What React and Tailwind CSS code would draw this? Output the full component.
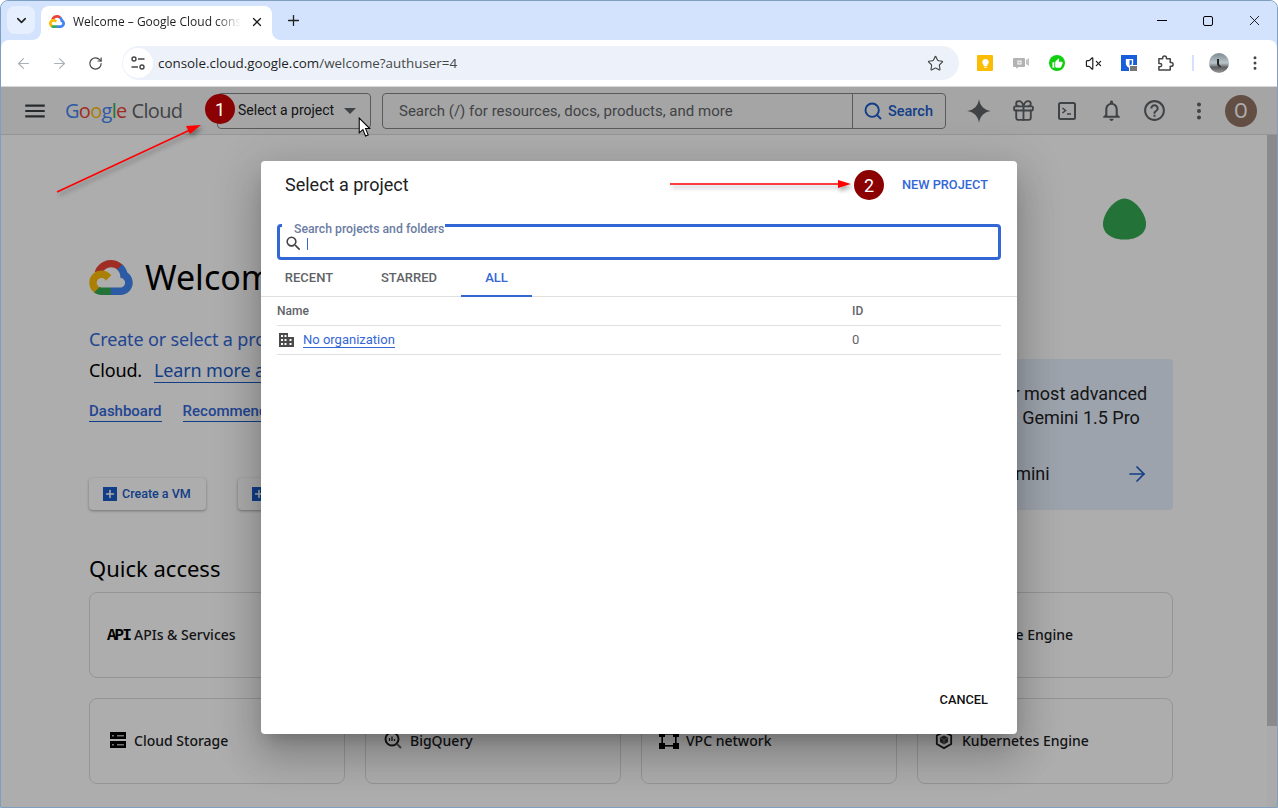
import React from "react";
import { ArrowLeft, ArrowRight, RotateCw, ChevronDown, Plus, X, Star, EllipsisVertical, Gift, Search, VolumeX } from "lucide-react";
import { MdNotificationsNone, MdHelpOutline, MdSearch, MdMenu, MdThumbUp } from "react-icons/md";

const CloudLogo = ({ className }) => (
  <svg viewBox="0 0 2385.7 1919.9" className={className}>
    <path fill="#ea4335" d="M1513.8 528.7h72.8l207.4-207.4 10.2-88c-385.9-340.6-975-303.9-1315.6 82C393.9 422.5 329.9 542.2 297 671c23.1-9.5 48.7-11 72.8-4.4l414.7-68.4s21.1-34.9 32-32.7c184.5-202.6 495-226.2 708-53.8h-10.7z" />
    <path fill="#4285f4" d="M2089.4 688.2c-47.7-175.5-145.5-333.3-281.6-454l-291 291c122.9 100.4 192.9 251.7 189.9 410.4v51.7c143.1 0 259 116 259 259 0 143.1-116 259-259 259h-518.1l-51.7 52.4v310.7l51.7 51.7h518.1c297 2.3 560.5-190.2 648.7-473.8 88-283.7-20-591.7-266-758.2z" />
    <path fill="#34a853" d="M669.8 1917h518.1v-414.7H669.8c-36.9 0-73.4-7.9-107-23.3l-72.8 22.5-208.8 207.4-18.2 72.8c117.1 88.4 260 136.2 406.8 135.3z" />
    <path fill="#fbbc05" d="M669.8 571.6c-287.8 1.7-542.7 186-634.5 458.7-91.8 272.7-.3 573.7 227.8 749.1l300.5-300.5c-130.4-58.9-188.3-212.3-129.4-342.7 58.9-130.4 212.3-188.3 342.7-129.4 57.4 26 103.4 72 129.4 129.4l300.5-300.5c-127.9-167.1-326.6-264.8-537-264.1z" />
  </svg>
);

const Tune = () => (
  <svg viewBox="0 0 16 16" className="w-4 h-4" fill="none" stroke="#444746" strokeWidth="1.4">
    <circle cx="4" cy="4" r="2" /><path d="M8 4h6.500" />
    <circle cx="12" cy="12" r="2" /><path d="M1.500 12H8" />
  </svg>
);

const ToolBtn = ({ children }) => <div className="w-9 h-9 flex items-center justify-center shrink-0">{children}</div>;

const Card = ({ icon, label }) => (
  <div className="h-[86px] rounded-lg border border-[#dadce0] flex items-center pl-[17px] pb-[2px] text-[14px] font-medium font-['Noto_Sans',sans-serif] text-[#202124] whitespace-nowrap">
    <span className="w-[27px] flex items-center shrink-0">{icon}</span>
    {label}
  </div>
);

const StorageIcon = () => (
  <svg viewBox="0 0 18 18" className="w-[18px] h-[18px] ml-[2px]">
    <rect x="1" y="1" width="16" height="7" fill="#000" />
    <rect x="1" y="10" width="16" height="7" fill="#000" />
    <rect x="3" y="4" width="2" height="1.500" fill="#adadad" /><rect x="8" y="4" width="7" height="1.500" fill="#adadad" />
    <rect x="3" y="13" width="2" height="1.500" fill="#adadad" /><rect x="8" y="13" width="7" height="1.500" fill="#adadad" />
  </svg>
);
const BigQueryIcon = () => (
  <svg viewBox="0 0 20 20" className="w-[20px] h-[20px]" fill="none" stroke="#202124">
    <circle cx="9" cy="9" r="6.500" strokeWidth="2" />
    <path d="M14 14l4 4" strokeWidth="2" stroke="#5f6368" />
    <path d="M6.500 8v3M9 6.500V11M11.500 9v2" strokeWidth="1.300" />
  </svg>
);
const VpcIcon = () => (
  <svg viewBox="0 0 20 20" className="w-[20px] h-[20px]" fill="#000">
    <rect x="0" y="1" width="6" height="6" /><rect x="14" y="1" width="6" height="6" />
    <rect x="0" y="13" width="6" height="6" /><rect x="14" y="13" width="6" height="6" />
    <rect x="6" y="3" width="8" height="1.600" /><rect x="6" y="15" width="8" height="1.600" />
    <rect x="2.400" y="7" width="1.600" height="6" /><rect x="16" y="7" width="1.600" height="6" />
  </svg>
);
const KubeIcon = () => (
  <svg viewBox="0 0 20 20" className="w-[18px] h-[20px]" fill="none">
    <path d="M10 1l8 4v9.500L10 19l-8-4.500V5z" stroke="#202124" strokeWidth="2" />
    <path d="M10 5l4.500 2.300v5L10 15l-4.500-2.700v-5z" fill="#3c3c3c" />
    <path d="M5.500 7.300L10 10l4.500-2.700M10 10v5" stroke="#aaa" strokeWidth="0.800" />
  </svg>
);
const DomainIcon = () => (
  <svg viewBox="0 0 15 14" className="w-[15px] h-[14px] shrink-0">
    <path d="M0 0h9v4h6v10H0z" fill="#4a4a4a" />
    <g fill="#fff">
      <rect x="2" y="2" width="2" height="2" /><rect x="5.500" y="2" width="2" height="2" />
      <rect x="2" y="6" width="2" height="2" /><rect x="5.500" y="6" width="2" height="2" />
      <rect x="2" y="10" width="2" height="2" /><rect x="5.500" y="10" width="2" height="2" />
      <rect x="10.500" y="6" width="2" height="2" /><rect x="10.500" y="10" width="2" height="2" />
    </g>
  </svg>
);
const PuzzleIcon = () => (
  <svg viewBox="0 0 18 18" className="w-[17px] h-[17px]" fill="none" stroke="#444746" strokeWidth="1.600" strokeLinejoin="round">
    <path d="M2 4h4V3a2 2 0 0 1 4 0v1h4v4h1a2 2 0 0 1 0 4h-1v4H2v-3.500h1.200a1.800 1.800 0 0 0 0-3.600H2z" />
  </svg>
);

export default function App() {
  return (
    <div className="relative w-[1278px] h-[808px] overflow-hidden flex flex-col border border-[#7f9fc0] rounded-t-lg bg-[#d3e3fd] text-[#202124] font-['Roboto',sans-serif]">
      {/* tab strip */}
      <div className="h-[39px] shrink-0 bg-[#d3e3fd] flex items-start pt-[5px] pl-[6px]">
        <div className="w-[28px] h-[28px] rounded-lg bg-[#e6effd] flex items-center justify-center">
          <ChevronDown size={15} strokeWidth={2.5} color="#1f1f1f" />
        </div>
        <div className="relative ml-[6px] w-[231px] h-[34px] bg-white rounded-t-lg flex items-center pl-[8px] pb-[3px] font-['Open_Sans',sans-serif]">
          <span className="absolute -left-2 bottom-0 w-2 h-2 bg-[radial-gradient(circle_at_0_0,transparent_7.500px,white_8px)]" />
          <span className="absolute -right-2 bottom-0 w-2 h-2 bg-[radial-gradient(circle_at_100%_0,transparent_7.500px,white_8px)]" />
          <CloudLogo className="w-[16px] h-[13px] shrink-0" />
          <span className="ml-[8px] w-[168px] whitespace-nowrap overflow-hidden text-[12px] text-[#1f1f1f] [mask-image:linear-gradient(to_right,black_85%,transparent)]">Welcome – Google Cloud console</span>
          <X size={14} strokeWidth={2.2} color="#1f1f1f" className="ml-[9px]" />
        </div>
        <div className="ml-[7px] w-[28px] h-[28px] flex items-center justify-center">
          <Plus size={17} strokeWidth={1.8} color="#1f1f1f" />
        </div>
        <div className="ml-auto flex -mt-[5px]">
          <div className="w-[46px] h-[39px] flex items-center justify-center"><div className="w-[10px] h-px bg-black" /></div>
          <div className="w-[46px] h-[39px] flex items-center justify-center"><div className="w-[10px] h-[10px] border border-black rounded-[2px]" /></div>
          <div className="w-[46px] h-[39px] flex items-center justify-center"><X size={17} strokeWidth={1.200} color="#000" /></div>
        </div>
      </div>

      {/* browser toolbar */}
      <div className="h-[47px] shrink-0 bg-white rounded-t-lg flex items-center pl-[4px] border-b border-[#d6d6d6]">
        <ToolBtn><ArrowLeft size={17} strokeWidth={1.6} color="#aab0b6" /></ToolBtn>
        <ToolBtn><ArrowRight size={17} strokeWidth={1.6} color="#aab0b6" /></ToolBtn>
        <ToolBtn><RotateCw size={15} strokeWidth={1.9} color="#444746" /></ToolBtn>
        <div className="ml-[9px] w-[837px] h-[34px] rounded-full bg-[#edf2fa] flex items-center pl-[1px] pr-[15px]">
          <div className="w-[30px] h-[30px] rounded-full bg-white flex items-center justify-center"><Tune /></div>
          <span className="ml-[5px] text-[13.400px] font-['Open_Sans',sans-serif] text-[#1f1f1f]">console.cloud.google.com<span className="text-[#444746]">/welcome?authuser=4</span></span>
          <Star size={17} strokeWidth={1.6} color="#444746" className="ml-auto" />
        </div>
        <div className="ml-[8px] flex items-center">
          <ToolBtn>
            <div className="w-4 h-4 rounded-[1px] bg-[#fbbc04] flex items-center justify-center">
              <svg viewBox="0 0 12 12" className="w-[11px] h-[11px]"><path d="M6 1a3.600 3.600 0 0 0-2 6.600V9h4V7.600A3.600 3.600 0 0 0 6 1zM4.500 10h3v1h-3z" fill="#fff" /></svg>
            </div>
          </ToolBtn>
          <ToolBtn>
            <svg viewBox="0 0 16 14" className="w-4 h-[14px]"><path d="M0 3a1 1 0 0 1 1-1h10a1 1 0 0 1 1 1v7a1 1 0 0 1-1 1H5l-1 2-1-2H1a1 1 0 0 1-1-1z" fill="#b3b3b3" /><path d="M13 4l3-2v8l-3-2z" fill="#c4c4c4" /><rect x="5" y="5" width="3" height="3" fill="none" stroke="#fff" /></svg>
          </ToolBtn>
          <ToolBtn>
            <div className="w-4 h-4 rounded-full bg-[#0fcf0f] flex items-center justify-center"><MdThumbUp size={11} color="#fff" /></div>
          </ToolBtn>
          <ToolBtn><VolumeX size={17} strokeWidth={1.7} color="#1f1f1f" /></ToolBtn>
          <ToolBtn>
            <div className="relative w-4 h-4 bg-[#175ddc] flex items-center justify-center">
              <svg viewBox="0 0 12 12" className="w-[11px] h-[11px]"><path d="M2 1h8v5c0 2.500-2 4-4 5-2-1-4-2.500-4-5z" fill="#fff" /><path d="M6 2.500h2.500V6c0 1.200-1.200 2-2.500 3z" fill="#175ddc" /></svg>
              <div className="absolute -right-[1px] -bottom-[1px] w-[9px] h-[7px] bg-[#777] rounded-[1px] border border-white" />
            </div>
          </ToolBtn>
          <ToolBtn><PuzzleIcon /></ToolBtn>
          <div className="ml-[9px] w-[2px] h-[16px] bg-[#d3e3fd]" />
          <div className="ml-[7px] w-9 h-9 flex items-center justify-center">
            <div className="w-5 h-5 rounded-full bg-[linear-gradient(180deg,#7d8b93_0%,#b9c4c9_50%,#5d5f60_72%,#9a9a98_100%)] flex items-center justify-center">
              <div className="w-[4px] h-[8px] border-l-2 border-b border-[#222] rounded-bl-sm" />
            </div>
          </div>
          <ToolBtn><EllipsisVertical size={18} strokeWidth={2} color="#444746" /></ToolBtn>
        </div>
      </div>

      {/* console page */}
      <div className="relative flex-1 flex flex-col min-h-0 bg-white">
        <div className="h-[48px] shrink-0 bg-[#f4f4f4] border-b border-[#dcdcdc] flex items-center pl-[10px]">
          <div className="w-12 flex justify-center"><MdMenu size={26} color="#3c4043" /></div>
          <div className="ml-[7px] w-[151px] flex items-baseline whitespace-nowrap text-[20px] leading-none font-['Open_Sans',sans-serif] tracking-[-0.700px] -translate-x-px">
            <span><span className="text-[#4285f4]">G</span><span className="text-[#ea4335]">o</span><span className="text-[#fbbc04]">o</span><span className="text-[#4285f4]">g</span><span className="text-[#34a853]">l</span><span className="text-[#ea4335]">e</span></span>
            <span className="ml-[5px] text-[#5f6368]">Cloud</span>
          </div>
          <div className="w-[154px] h-9 rounded border border-[#80868b] flex items-center pl-5 pr-[14px]">
            <span className="text-[14px] text-[#202124] whitespace-nowrap">Select a project</span>
            <span className="ml-auto w-0 h-0 border-x-[6px] border-x-transparent border-t-[6px] border-t-[#5f6368]" />
          </div>
          <div className="ml-[11px] w-[564px] h-9 rounded border border-[#80868b] flex items-center">
            <span className="flex-1 pl-4 pt-px text-[15px] text-[#5f6368] whitespace-nowrap">Search (/) for resources, docs, products, and more</span>
            <div className="w-[93px] h-full border-l border-[#80868b] flex items-center pl-[10px] gap-[5px]">
              <Search size={20} strokeWidth={2.3} color="#1a5cc8" />
              <span className="pt-[2px] text-[14.500px] font-medium text-[#1a5cc8]">Search</span>
            </div>
          </div>
          <div className="ml-[11px] flex items-center">
            <div className="w-11 flex justify-center">
              <svg viewBox="0 0 24 24" className="w-[24px] h-[24px]"><path d="M12 0c1 7 5 11 12 12-7 1-11 5-12 12-1-7-5-11-12-12 7-1 11-5 12-12z" fill="#5f6368" /></svg>
            </div>
            <div className="w-11 flex justify-center"><Gift size={25} strokeWidth={1.8} color="#5f6368" /></div>
            <div className="w-11 flex justify-center">
              <svg viewBox="0 0 20 20" className="w-[20px] h-[20px]" fill="none" stroke="#5f6368" strokeWidth="2"><rect x="2" y="2" width="16" height="16" rx="1.500" /><path d="M5.500 7l3 2.500-3 2.500M10 13h4" strokeWidth="1.600" /></svg>
            </div>
            <div className="w-11 flex justify-center"><MdNotificationsNone size={25} color="#5f6368" /></div>
            <div className="w-11 flex justify-center -translate-x-px"><MdHelpOutline size={25} color="#5f6368" /></div>
            <div className="w-11 flex justify-center"><EllipsisVertical size={22} strokeWidth={2.4} color="#5f6368" /></div>
            <div className="ml-[4px] w-8 h-8 rounded-full bg-[#937364] text-[#fff] flex items-center justify-center text-[20px]">O</div>
          </div>
        </div>

        <div className="flex-1 flex min-h-0">
          <div className="flex-1 flex flex-col pl-[88px] pr-[94px] font-['Noto_Sans',sans-serif]">
            <div className="flex justify-between">
              <div className="pt-[125px]">
                <div className="flex items-center gap-[12px] h-[34px]">
                  <CloudLogo className="w-[44px] h-[35px]" />
                  <span className="text-[34px] leading-none text-[#000] whitespace-nowrap -mt-px">Welcome</span>
                </div>
                <div className="mt-[30px] text-[18px] leading-[31px] whitespace-nowrap tracking-[-0.150px]">
                  <div className="text-[#3367d6]">Create or select a project</div>
                  <div className="text-[#000]">Cloud.<span className="ml-[12px] text-[#1a5cc8] border-b border-[#1a5cc8]">Learn more about</span></div>
                </div>
                <div className="mt-[15px] flex gap-[21px] text-[15px] leading-[20px] font-medium font-['Roboto',sans-serif] text-[#3367d6]">
                  <span className="border-b border-[#1a5cc8]">Dashboard</span>
                  <span className="border-b border-[#1a5cc8]">Recommendations</span>
                </div>
                <div className="mt-[56px] flex gap-[32px] font-['Roboto',sans-serif]">
                  <div className="w-[117px] h-8 rounded bg-white shadow-[0_1px_3px_rgba(0,0,0,0.35)] flex items-center pl-[14px] gap-[5px] text-[12.500px] font-medium text-[#1a5cc8]">
                    <span className="w-[14px] h-[14px] bg-[#1a5cc8] flex items-center justify-center"><Plus size={12} strokeWidth={3} color="#fff" /></span>Create a VM
                  </div>
                  <div className="w-[117px] h-8 rounded bg-white shadow-[0_1px_3px_rgba(0,0,0,0.35)] flex items-center pl-[14px] gap-[5px] text-[12.500px] font-medium text-[#1a5cc8]">
                    <span className="w-[14px] h-[14px] bg-[#1a5cc8] flex items-center justify-center"><Plus size={12} strokeWidth={3} color="#fff" /></span>Run a query
                  </div>
                </div>
              </div>
              <div className="w-[235px] shrink-0">
                <svg viewBox="0 0 44 42" className="mt-[63px] ml-[165px] w-[43px] h-[42px]"><path d="M22 0c10 0 22 15 22 26 0 11-11 16-22 16S0 37 0 26C0 15 12 0 22 0z" fill="#34a853" /></svg>
                <div className="mt-[119px] h-[151px] rounded bg-[#e8f0fe] pl-[26px] pt-[23px] pr-[26px] font-['Roboto',sans-serif] text-[18px] leading-[24px] text-[#202124]">
                  <div className="whitespace-nowrap">Try our most advanced</div>
                  <div className="whitespace-nowrap">model, Gemini 1.5 Pro</div>
                  <div className="mt-[32px] flex items-center justify-between">Try Gemini<ArrowRight size={24} strokeWidth={1.7} color="#1a5cc8" className="-mr-[2px]" /></div>
                </div>
              </div>
            </div>
            <div className="mt-[43px] text-[22px] leading-[30px] text-[#000] whitespace-nowrap">Quick access</div>
            <div className="mt-[9px] grid grid-cols-4 gap-5">
              <Card label="APIs & Services" icon={<span className="font-['Liberation_Mono',monospace] font-bold text-[16px] leading-[18px] pt-[3px] tracking-[-2px] text-[#000]">API</span>} />
              <Card label="IAM & Admin" icon={<StorageIcon />} />
              <Card label="Billing" icon={<StorageIcon />} />
              <Card label="Compute Engine" icon={<StorageIcon />} />
              <Card label="Cloud Storage" icon={<StorageIcon />} />
              <Card label="BigQuery" icon={<BigQueryIcon />} />
              <Card label="VPC network" icon={<VpcIcon />} />
              <Card label="Kubernetes Engine" icon={<KubeIcon />} />
            </div>
          </div>
          <div className="w-[10px] shrink-0 flex flex-col bg-[#fbfbfb]">
            <div className="h-[591px] bg-[#cccccc]" />
          </div>
        </div>

        {/* scrim + dialog */}
        <div className="absolute inset-0 bg-black/[0.32] flex items-start justify-center pt-[74px]">
          <div className="w-[756px] h-[573px] bg-white rounded flex flex-col shadow-[0_11px_15px_-7px_rgba(0,0,0,0.2),0_24px_38px_3px_rgba(0,0,0,0.14),0_9px_46px_8px_rgba(0,0,0,0.12)]">
            <div className="h-12 flex items-center justify-between pl-6 pr-[29px] shrink-0">
              <span className="text-[18px] text-[#202124] pb-[2px]">Select a project</span>
              <span className="text-[12.800px] font-medium text-[#3367d6] pb-px">NEW PROJECT</span>
            </div>
            <div className="relative mt-[15px] mx-4 h-9 shrink-0 border-[3px] border-[#3367d6] rounded flex items-center pl-[4px]">
              <span className="absolute left-[2px] -top-[4px] bg-white pl-[12px] pr-px text-[12.250px] leading-[13px] font-medium text-[#6b7ca3] whitespace-nowrap">Search projects and folders</span>
              <MdSearch size={19} color="#444" className="mt-[2px]" />
              <span className="ml-[4px] mt-[3px] w-px h-[12px] bg-[#3367d6]" />
            </div>
            <div className="h-[37px] shrink-0 border-b border-[#e0e0e0] flex text-[13px] font-medium">
              <div className="w-[96px] flex items-center justify-center text-[#5f6368]">RECENT</div>
              <div className="w-[104px] flex items-center justify-center text-[#5f6368]">STARRED</div>
              <div className="w-[71px] flex items-center justify-center text-[#3367d6] border-b-2 border-[#3367d6] h-[37px]">ALL</div>
            </div>
            <div className="mx-4 flex flex-col text-[12px]">
              <div className="h-[29px] border-b border-[#e0e0e0] flex items-center font-medium text-[#5f6368]">
                <span className="w-[575px]">Name</span><span>ID</span>
              </div>
              <div className="h-[29px] border-b border-[#e0e0e0] flex items-center text-[13px]">
                <div className="w-[575px] flex items-center pl-[2px]">
                  <DomainIcon />
                  <span className="ml-[9px] text-[#3367d6] border-b border-[#3367d6] leading-[14px]">No organization</span>
                </div>
                <span className="text-[#5f6368]">0</span>
              </div>
            </div>
            <div className="mt-auto mb-4 pr-[29px] h-9 flex items-center justify-end text-[12.800px] font-medium text-[#111]">CANCEL</div>
          </div>
        </div>
      </div>

      {/* annotations */}
      <svg className="absolute left-[-1px] top-[-1px] w-[1278px] h-[808px] pointer-events-none [filter:drop-shadow(2px_3px_2px_rgba(0,0,0,0.35))]" viewBox="0 0 1278 808">
        <path d="M57 192L190 130" stroke="#f00" strokeWidth="1.500" fill="none" />
        <path d="M201 125l-15 1 4 8z" fill="#f00" />
        <path d="M670 184H840" stroke="#f00" strokeWidth="1.500" fill="none" />
        <path d="M851 184l-13-4v8z" fill="#f00" />
      </svg>
      <div className="absolute left-[204px] top-[93px] w-[30px] h-[30px] rounded-full bg-[#8b0000] text-white text-[18px] flex items-center justify-center">1</div>
      <div className="absolute left-[853px] top-[169px] w-[30px] h-[30px] rounded-full bg-[#8b0000] text-white text-[18px] flex items-center justify-center">2</div>
      <svg viewBox="0 0 12 19" className="absolute left-[357px] top-[116px] w-[13px] h-[20px]">
        <path d="M1 1v14l3.500-3 2.500 6 2.500-1-2.500-6H11z" fill="#fff" stroke="#000" strokeWidth="1" />
      </svg>
    </div>
  );
}
